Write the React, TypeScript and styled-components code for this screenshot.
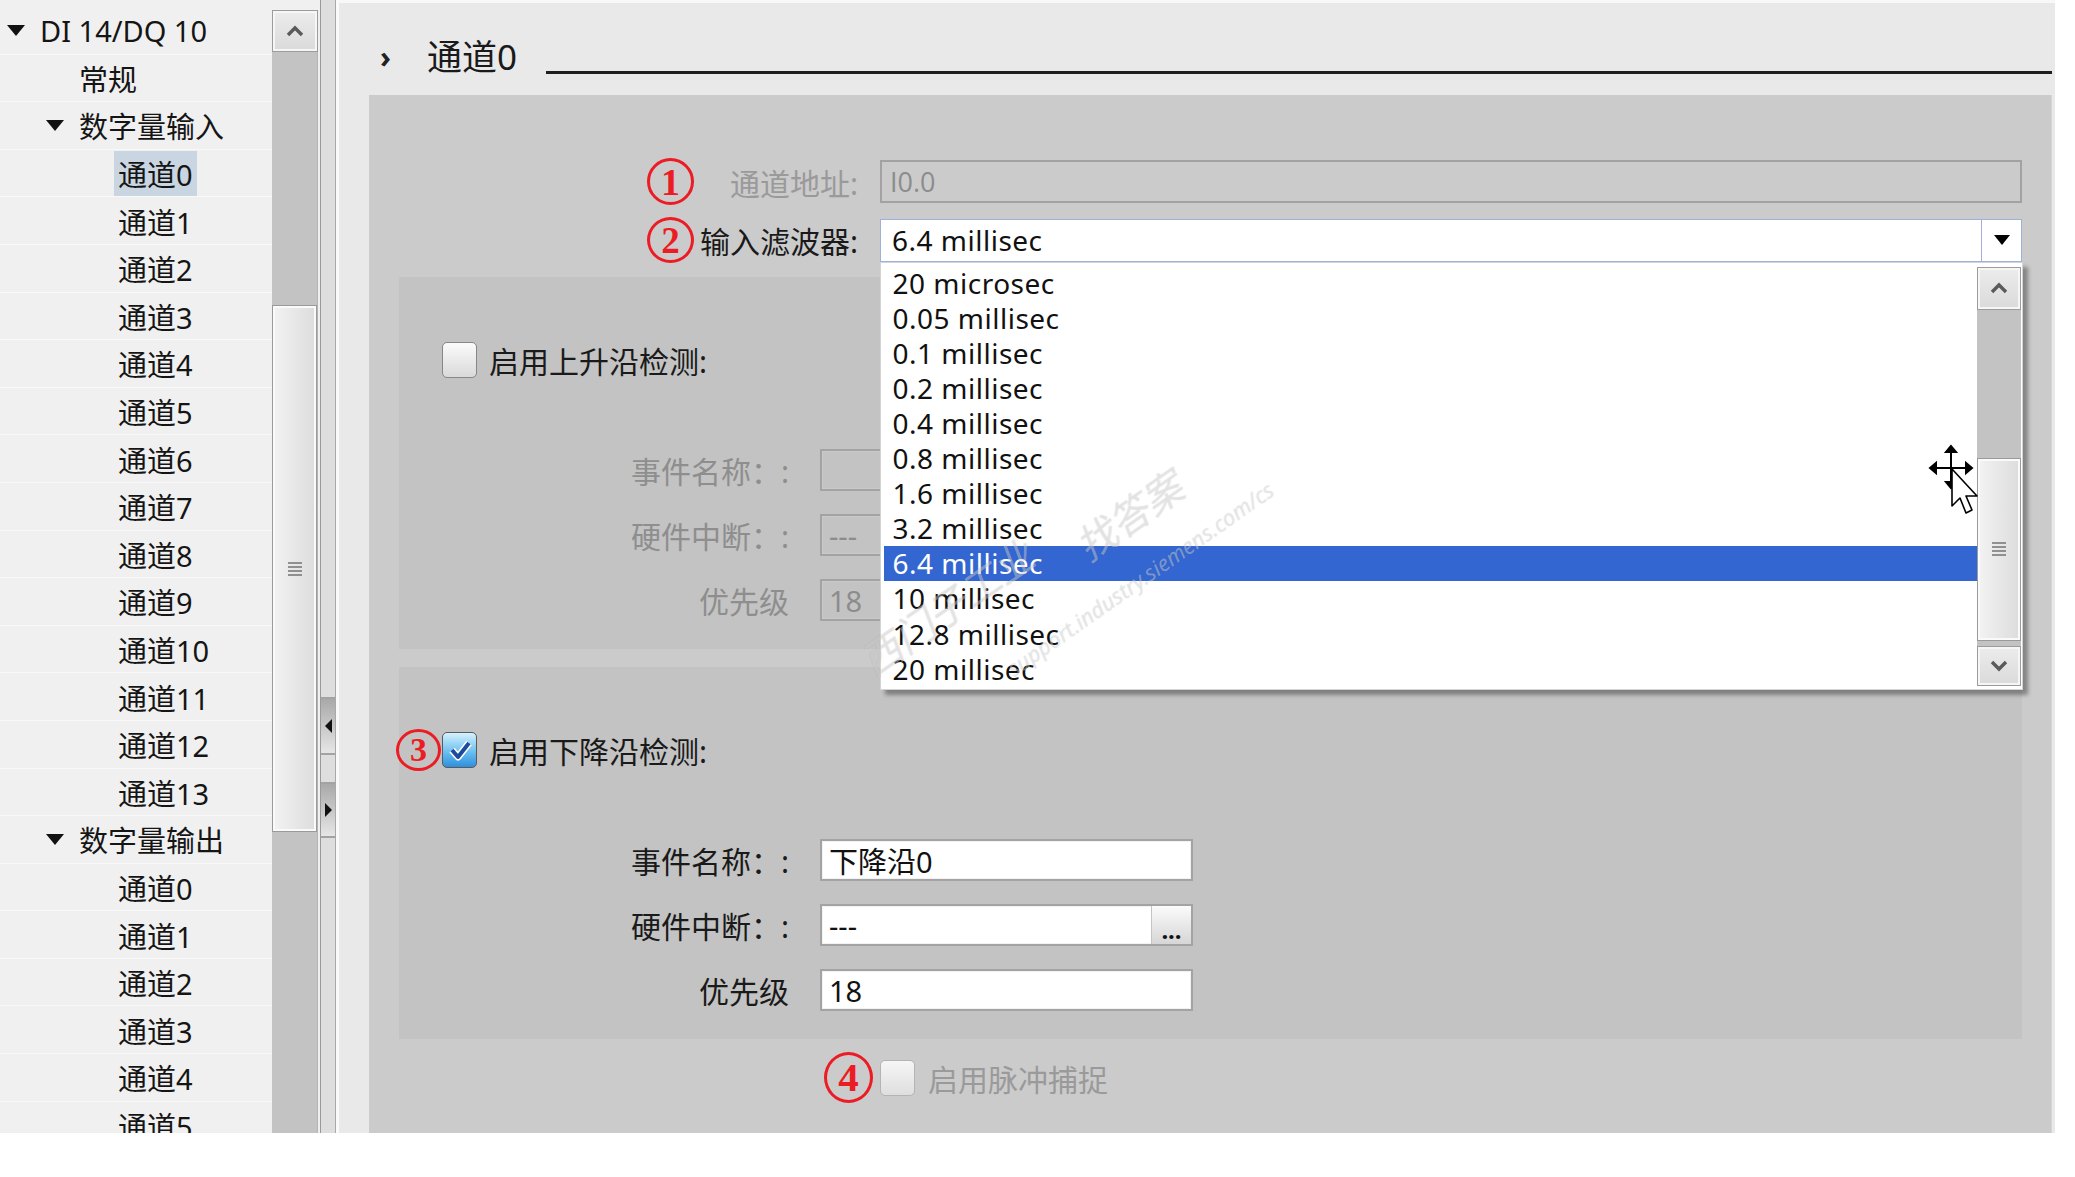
import styled, { createGlobalStyle } from "styled-components";

const FONT = `"Noto Sans", "Noto Sans CJK SC", sans-serif`;

const GlobalStyle = createGlobalStyle`
  html, body { margin: 0; padding: 0; background: #fff; }
  body { font-family: ${FONT}; color: #1a1a1a; }
  * { box-sizing: border-box; }
`;

interface ITreeItem {
  label: string;
  level: number;
  open?: boolean;
  selected?: boolean;
}

const channels = (n: number, selected = -1): ITreeItem[] =>
  Array.from({ length: n }, (_, i) => ({ label: `通道${i}`, level: 2, selected: i === selected }));

const tree: ITreeItem[] = [
  { label: "DI 14/DQ 10", level: 0, open: true },
  { label: "常规", level: 1 },
  { label: "数字量输入", level: 1, open: true },
  ...channels(14, 0),
  { label: "数字量输出", level: 1, open: true },
  ...channels(6),
];

const filters = [
  "20 microsec",
  "0.05 millisec",
  "0.1 millisec",
  "0.2 millisec",
  "0.4 millisec",
  "0.8 millisec",
  "1.6 millisec",
  "3.2 millisec",
  "6.4 millisec",
  "10 millisec",
  "12.8 millisec",
  "20 millisec",
];

const Chevron = ({ down }: { down?: boolean }) => (
  <svg width="22" height="14" viewBox="0 0 22 14">
    <polyline
      points={down ? "4,3 11,10 18,3" : "4,11 11,4 18,11"}
      fill="none"
      stroke="#5a5a5a"
      strokeWidth="3.4"
    />
  </svg>
);

const Grip = () => (
  <svg width="16" height="14" viewBox="0 0 16 14">
    {[1, 5, 9, 13].map((y) => (
      <line key={y} x1="1" x2="15" y1={y} y2={y} stroke="#7a7a7a" strokeWidth="1.6" />
    ))}
  </svg>
);

const CheckMark = () => (
  <svg width="30" height="30" viewBox="0 0 30 30">
    <polyline points="7,15 13,22 24,8" fill="none" stroke="#fff" strokeWidth="7" strokeLinejoin="round" />
    <polyline points="7,15 13,22 24,8" fill="none" stroke="#1d4c9c" strokeWidth="4" strokeLinejoin="round" />
  </svg>
);

const MoveCursor = () => (
  <svg width="54" height="74" viewBox="0 0 54 74">
    <g stroke="#000" strokeWidth="2" fill="#000">
      <line x1="6" y1="24" x2="40" y2="24" />
      <line x1="23" y1="6" x2="23" y2="40" />
      <polygon points="2,24 8,19 8,29" />
      <polygon points="44,24 38,19 38,29" />
      <polygon points="23,2 18,8 28,8" />
      <polygon points="23,44 18,38 28,38" />
    </g>
    <polygon
      points="24,25 24,62 32,54 38,69 44,66 38,52 49,52"
      fill="#fff"
      stroke="#000"
      strokeWidth="1.6"
      strokeLinejoin="round"
    />
  </svg>
);

const App = () => {
  return (
    <>
      <GlobalStyle />
      <Window>
        <Tree>
          {tree.map((item, i) => (
            <TreeRow key={i} $level={item.level}>
              <Caret $open={item.open} />
              <TreeLabel $selected={item.selected}>{item.label}</TreeLabel>
            </TreeRow>
          ))}
        </Tree>

        <TreeScroll>
          <ScrollButton $height={42}>
            <Chevron />
          </ScrollButton>
          <ScrollTrack>
            <ScrollThumb $offset={253} $height={527}>
              <Grip />
            </ScrollThumb>
          </ScrollTrack>
        </TreeScroll>

        <Splitter>
          <SplitterBar>
            <SplitterGap $height={697} />
            <SplitterButton $height={58}>
              <SplitArrow $dir="left" />
            </SplitterButton>
            <SplitterGap $height={27} />
            <SplitterButton $height={56}>
              <SplitArrow $dir="right" />
            </SplitterButton>
          </SplitterBar>
        </Splitter>

        <Pane>
          <Header>
            <HeaderChevron>›</HeaderChevron>
            <HeaderTitle>通道0</HeaderTitle>
            <HeaderRule />
          </Header>

          <Content>
            <TopRow>
              <LabelCell>
                <Marker $w={47} $h={47}>1</Marker>
                <LabelText $muted>通道地址:</LabelText>
              </LabelCell>
              <AddressBox>I0.0</AddressBox>
            </TopRow>

            <TopRow>
              <LabelCell>
                <Marker $w={47} $h={46}>2</Marker>
                <LabelText>输入滤波器:</LabelText>
              </LabelCell>
              <Select>
                <SelectValue>6.4 millisec</SelectValue>
                <SelectArrow />
                <DropList>
                  <DropItems>
                    {filters.map((f) => (
                      <DropItem key={f} $selected={f === "6.4 millisec"}>
                        {f}
                      </DropItem>
                    ))}
                  </DropItems>
                  <DropScroll>
                    <ScrollButton $height={43}>
                      <Chevron />
                    </ScrollButton>
                    <DropTrackGap />
                    <DropThumb>
                      <Grip />
                    </DropThumb>
                    <ScrollButton $height={40}>
                      <Chevron down />
                    </ScrollButton>
                  </DropScroll>
                  <CursorSpot>
                    <MoveCursor />
                  </CursorSpot>
                </DropList>
              </Select>
            </TopRow>

            <Panel $gap={17}>
              <CheckRow>
                <MarkerSlot />
                <CheckBox />
                <CheckLabel>启用上升沿检测:</CheckLabel>
              </CheckRow>
              <Fields>
                <FieldRow>
                  <FieldLabel $muted>事件名称：:</FieldLabel>
                  <FieldInput $disabled />
                </FieldRow>
                <FieldRow>
                  <FieldLabel $muted>硬件中断：:</FieldLabel>
                  <FieldInput $disabled>---</FieldInput>
                </FieldRow>
                <FieldRow>
                  <FieldLabel $muted>优先级</FieldLabel>
                  <FieldInput $disabled>18</FieldInput>
                </FieldRow>
              </Fields>
            </Panel>

            <Panel $gap={18}>
              <CheckRow>
                <MarkerSlot>
                  <Marker $w={45} $h={42}>3</Marker>
                </MarkerSlot>
                <CheckBox $checked>
                  <CheckMark />
                </CheckBox>
                <CheckLabel>启用下降沿检测:</CheckLabel>
              </CheckRow>
              <Fields>
                <FieldRow>
                  <FieldLabel>事件名称：:</FieldLabel>
                  <FieldInput>下降沿0</FieldInput>
                </FieldRow>
                <FieldRow>
                  <FieldLabel>硬件中断：:</FieldLabel>
                  <FieldInput>
                    <FieldText>---</FieldText>
                    <BrowseButton>...</BrowseButton>
                  </FieldInput>
                </FieldRow>
                <FieldRow>
                  <FieldLabel>优先级</FieldLabel>
                  <FieldInput>18</FieldInput>
                </FieldRow>
              </Fields>
            </Panel>

            <PulseRow>
              <Marker $w={49} $h={51}>4</Marker>
              <CheckBox $disabled />
              <CheckLabel $muted>启用脉冲捕捉</CheckLabel>
            </PulseRow>

            <Watermark $x={710} $y={425} $size={40}>找答案</Watermark>
            <Watermark $x={640} $y={560} $size={22}>support.industry.siemens.com/cs</Watermark>
            <Watermark $x={495} $y={540} $size={40}>西门子工业</Watermark>
          </Content>
        </Pane>
      </Window>
    </>
  );
};

export default App;

const Window = styled.div`
  display: flex;
  width: 2055px;
  height: 1133px;
  overflow: hidden;
`;

/* ---------- tree ---------- */

const Tree = styled.div`
  width: 272px;
  flex-shrink: 0;
  background: #f0f0f0;
  padding-top: 7px;
  overflow: hidden;
`;

const TreeRow = styled.div<{ $level: number }>`
  height: 47.6px;
  display: flex;
  align-items: center;
  padding-left: ${({ $level }) => 7 + $level * 39}px;
  border-bottom: 1px solid #f8f8f8;
  font-size: 29px;
  white-space: nowrap;
  color: #151515;
`;

const Caret = styled.span<{ $open?: boolean }>`
  width: 33px;
  flex-shrink: 0;
  display: flex;
  align-items: center;
  &::before {
    content: "";
    display: ${({ $open }) => ($open ? "block" : "none")};
    border-left: 9px solid transparent;
    border-right: 9px solid transparent;
    border-top: 11px solid #111;
  }
`;

const TreeLabel = styled.span<{ $selected?: boolean }>`
  height: 45px;
  display: flex;
  align-items: center;
  padding: 0 4px;
  margin-left: -4px;
  background: ${({ $selected }) => ($selected ? "#c9d5e1" : "transparent")};
`;

/* ---------- scroll bars ---------- */

const TreeScroll = styled.div`
  width: 46px;
  flex-shrink: 0;
  display: flex;
  flex-direction: column;
  padding-top: 10px;
  background: #f0f0f0;
`;

const ScrollButton = styled.div<{ $height: number }>`
  height: ${({ $height }) => $height}px;
  flex-shrink: 0;
  display: flex;
  align-items: center;
  justify-content: center;
  border: 1px solid #9c9c9c;
  box-shadow: inset 0 0 0 2px #f6f6f6;
  background: linear-gradient(#ececec, #dadada);
`;

const ScrollTrack = styled.div`
  flex: 1;
  background: #c3c3c3;
  border-right: 1px solid #b4b4b4;
`;

const ScrollThumb = styled.div<{ $offset: number; $height: number }>`
  margin-top: ${({ $offset }) => $offset}px;
  height: ${({ $height }) => $height}px;
  display: flex;
  align-items: center;
  justify-content: center;
  border: 1px solid #9a9a9a;
  box-shadow: inset 0 0 0 2px #fafafa;
  background: linear-gradient(90deg, #f3f3f3, #dcdcdc);
`;

/* ---------- splitter ---------- */

const Splitter = styled.div`
  width: 21px;
  flex-shrink: 0;
  padding-left: 2px;
  background: #f0f0f0;
  border-right: 3px solid #fafafa;
`;

const SplitterBar = styled.div`
  height: 100%;
  display: flex;
  flex-direction: column;
  background: #dedede;
  border-left: 1px solid #9a9a9a;
  border-right: 1px solid #a9a9a9;
`;

const SplitterGap = styled.div<{ $height: number }>`
  height: ${({ $height }) => $height}px;
  flex-shrink: 0;
`;

const SplitterButton = styled.div<{ $height: number }>`
  height: ${({ $height }) => $height}px;
  flex-shrink: 0;
  display: flex;
  align-items: center;
  justify-content: center;
  border-top: 2px solid #a3a3a3;
  border-bottom: 2px solid #a3a3a3;
  background: linear-gradient(#a9a9a9, #e6e6e6);
`;

const SplitArrow = styled.span<{ $dir: "left" | "right" }>`
  border-top: 7px solid transparent;
  border-bottom: 7px solid transparent;
  ${({ $dir }) => ($dir === "left" ? "border-right: 7px solid #111;" : "border-left: 7px solid #111;")}
`;

/* ---------- right pane ---------- */

const Pane = styled.div`
  flex: 1;
  display: flex;
  flex-direction: column;
  background: #e9e9e9;
  padding-right: 3px;
  border-top: 3px solid #f8f8f8;
`;

const Header = styled.div`
  height: 92px;
  flex-shrink: 0;
  display: flex;
  align-items: flex-start;
  padding: 33px 0 0 41px;
`;

const HeaderChevron = styled.span`
  width: 47px;
  font-size: 30px;
  line-height: 42px;
  font-weight: 700;
  color: #222;
`;

const HeaderTitle = styled.span`
  font-size: 35px;
  line-height: 42px;
  color: #1a1a1a;
`;

const HeaderRule = styled.div`
  flex: 1;
  height: 3px;
  margin: 35px 0 0 29px;
  background: #1e1e1e;
`;

const Content = styled.div`
  flex: 1;
  position: relative;
  margin-left: 30px;
  padding: 63px 29px 0 30px;
  background: #cbcbcb;
  border-right: 1px solid #d6d6d6;
`;

const TopRow = styled.div`
  display: grid;
  grid-template-columns: 459px 1fr;
  column-gap: 22px;
  align-items: center;
  height: 43px;
  & + & {
    margin-top: 16px;
  }
`;

const LabelCell = styled.div`
  display: flex;
  align-items: center;
  padding-left: 248px;
`;

const LabelText = styled.span<{ $muted?: boolean }>`
  flex: 1;
  text-align: right;
  font-size: 30px;
  white-space: nowrap;
  color: ${({ $muted }) => ($muted ? "#9a9a9a" : "#1a1a1a")};
`;

const Marker = styled.span<{ $w: number; $h: number }>`
  width: ${({ $w }) => $w}px;
  height: ${({ $h }) => $h}px;
  flex-shrink: 0;
  display: inline-flex;
  align-items: center;
  justify-content: center;
  border: 3px solid #ec1c24;
  border-radius: 50%;
  color: #ec1c24;
  font-family: "Liberation Serif", serif;
  font-weight: 700;
  font-size: ${({ $h }) => Math.round($h * 0.8)}px;
  line-height: 1;
`;

const AddressBox = styled.div`
  height: 43px;
  display: flex;
  align-items: center;
  padding-left: 8px;
  border: 2px solid #a2a2a2;
  background: #cbcbcb;
  font-family: "Open Sans", ${FONT};
  font-size: 27px;
  color: #8c8c8c;
`;

const Select = styled.div`
  position: relative;
  height: 43px;
  display: flex;
  border: 1.5px solid #9fb1d9;
  background: #fff;
`;

const SelectValue = styled.span`
  flex: 1;
  display: flex;
  align-items: center;
  padding-left: 11px;
  font-size: 28px;
  letter-spacing: 0.5px;
  color: #111;
`;

const SelectArrow = styled.span`
  width: 40px;
  display: flex;
  align-items: center;
  justify-content: center;
  border-left: 1.5px solid #9fb1d9;
  &::before {
    content: "";
    border-left: 8px solid transparent;
    border-right: 8px solid transparent;
    border-top: 10px solid #000;
  }
`;

const DropList = styled.div`
  position: absolute;
  top: calc(100% + 1px);
  left: -1.5px;
  right: -2px;
  height: 428px;
  display: flex;
  z-index: 5;
  background: #fff;
  border: 1px solid #d4d4d4;
  box-shadow: 5px 5px 4px rgba(0, 0, 0, 0.35);
`;

const DropItems = styled.div`
  flex: 1;
  padding: 3px 0 0 3px;
`;

const DropItem = styled.div<{ $selected?: boolean }>`
  height: 35.05px;
  display: flex;
  align-items: center;
  padding-left: 9px;
  font-size: 28px;
  letter-spacing: 0.5px;
  color: ${({ $selected }) => ($selected ? "#fff" : "#111")};
  background: ${({ $selected }) => ($selected ? "#3366d0" : "transparent")};
`;

const DropScroll = styled.div`
  width: 44px;
  margin: 4px 1px 3px 0;
  display: flex;
  flex-direction: column;
  background: #c3c3c3;
`;

const DropTrackGap = styled.div`
  height: 148px;
  flex-shrink: 0;
`;

const DropThumb = styled.div`
  height: 183px;
  margin-bottom: 5px;
  display: flex;
  align-items: center;
  justify-content: center;
  border: 1px solid #9a9a9a;
  box-shadow: inset 0 0 0 2px #fafafa;
  background: linear-gradient(90deg, #f3f3f3, #dcdcdc);
`;

const CursorSpot = styled.div`
  position: absolute;
  left: 1047px;
  top: 181px;
  pointer-events: none;
`;

/* ---------- edge panels ---------- */

const Panel = styled.div<{ $gap: number }>`
  margin-top: ${({ $gap }) => $gap}px;
  height: 372px;
  padding-top: 61px;
  background: #c3c3c3;
`;

const CheckRow = styled.div`
  height: 44px;
  display: flex;
  align-items: center;
`;

const MarkerSlot = styled.div`
  width: 46px;
  flex-shrink: 0;
  display: flex;
  margin-left: -3px;
  padding-right: 3px;
`;

const CheckBox = styled.span<{ $checked?: boolean; $disabled?: boolean }>`
  width: 35px;
  height: 36px;
  flex-shrink: 0;
  display: flex;
  align-items: center;
  justify-content: center;
  border-radius: 5px;
  border: 1.5px solid ${({ $disabled, $checked }) => ($disabled ? "#b4b4b4" : $checked ? "#5a5a5a" : "#878787")};
  background: ${({ $checked, $disabled }) =>
    $checked
      ? "linear-gradient(#d6f1fd, #6cc0f0 55%, #2e8fdc)"
      : $disabled
      ? "linear-gradient(#f6f6f6, #dedede)"
      : "linear-gradient(#fbfbfb, #d9d9d9)"};
`;

const CheckLabel = styled.span<{ $muted?: boolean }>`
  margin-left: 12px;
  font-size: 30px;
  white-space: nowrap;
  color: ${({ $muted }) => ($muted ? "#9a9a9a" : "#1a1a1a")};
`;

const Fields = styled.div`
  margin-top: 66px;
  display: flex;
  flex-direction: column;
  gap: 23px;
`;

const FieldRow = styled.div`
  display: grid;
  grid-template-columns: 390px 373px;
  column-gap: 31px;
  align-items: center;
  height: 42px;
`;

const FieldLabel = styled.span<{ $muted?: boolean }>`
  text-align: right;
  font-size: 30px;
  white-space: nowrap;
  color: ${({ $muted }) => ($muted ? "#8e8e8e" : "#1a1a1a")};
`;

const FieldInput = styled.div<{ $disabled?: boolean }>`
  height: 42px;
  display: flex;
  align-items: center;
  padding-left: 7px;
  border: 2px solid #a3a3a3;
  box-shadow: inset 0 0 0 1px ${({ $disabled }) => ($disabled ? "#cacaca" : "#f2f2f2")};
  background: ${({ $disabled }) => ($disabled ? "#c3c3c3" : "#fff")};
  font-size: 29px;
  color: ${({ $disabled }) => ($disabled ? "#8c8c8c" : "#111")};
`;

const FieldText = styled.span`
  flex: 1;
`;

const BrowseButton = styled.span`
  width: 40px;
  height: 100%;
  display: flex;
  align-items: flex-end;
  justify-content: center;
  padding-bottom: 2px;
  border-left: 1px solid #c4c4c4;
  background: linear-gradient(#fbfbfb, #d6d6d6);
  font-size: 24px;
  font-weight: 700;
  line-height: 1;
  color: #111;
`;

const PulseRow = styled.div`
  margin-top: 13px;
  height: 51px;
  display: flex;
  align-items: center;
  padding-left: 425px;
  gap: 7px;
  & > span:last-child {
    margin-left: 6px;
  }
`;

const Watermark = styled.span<{ $x: number; $y: number; $size: number }>`
  position: absolute;
  left: ${({ $x }) => $x}px;
  top: ${({ $y }) => $y}px;
  z-index: 6;
  transform: rotate(-35deg);
  transform-origin: left center;
  font-size: ${({ $size }) => $size}px;
  font-style: italic;
  white-space: nowrap;
  color: rgba(255, 255, 255, 0.4);
  text-shadow: 0 0 1px rgba(0, 0, 0, 0.18);
  pointer-events: none;
`;
